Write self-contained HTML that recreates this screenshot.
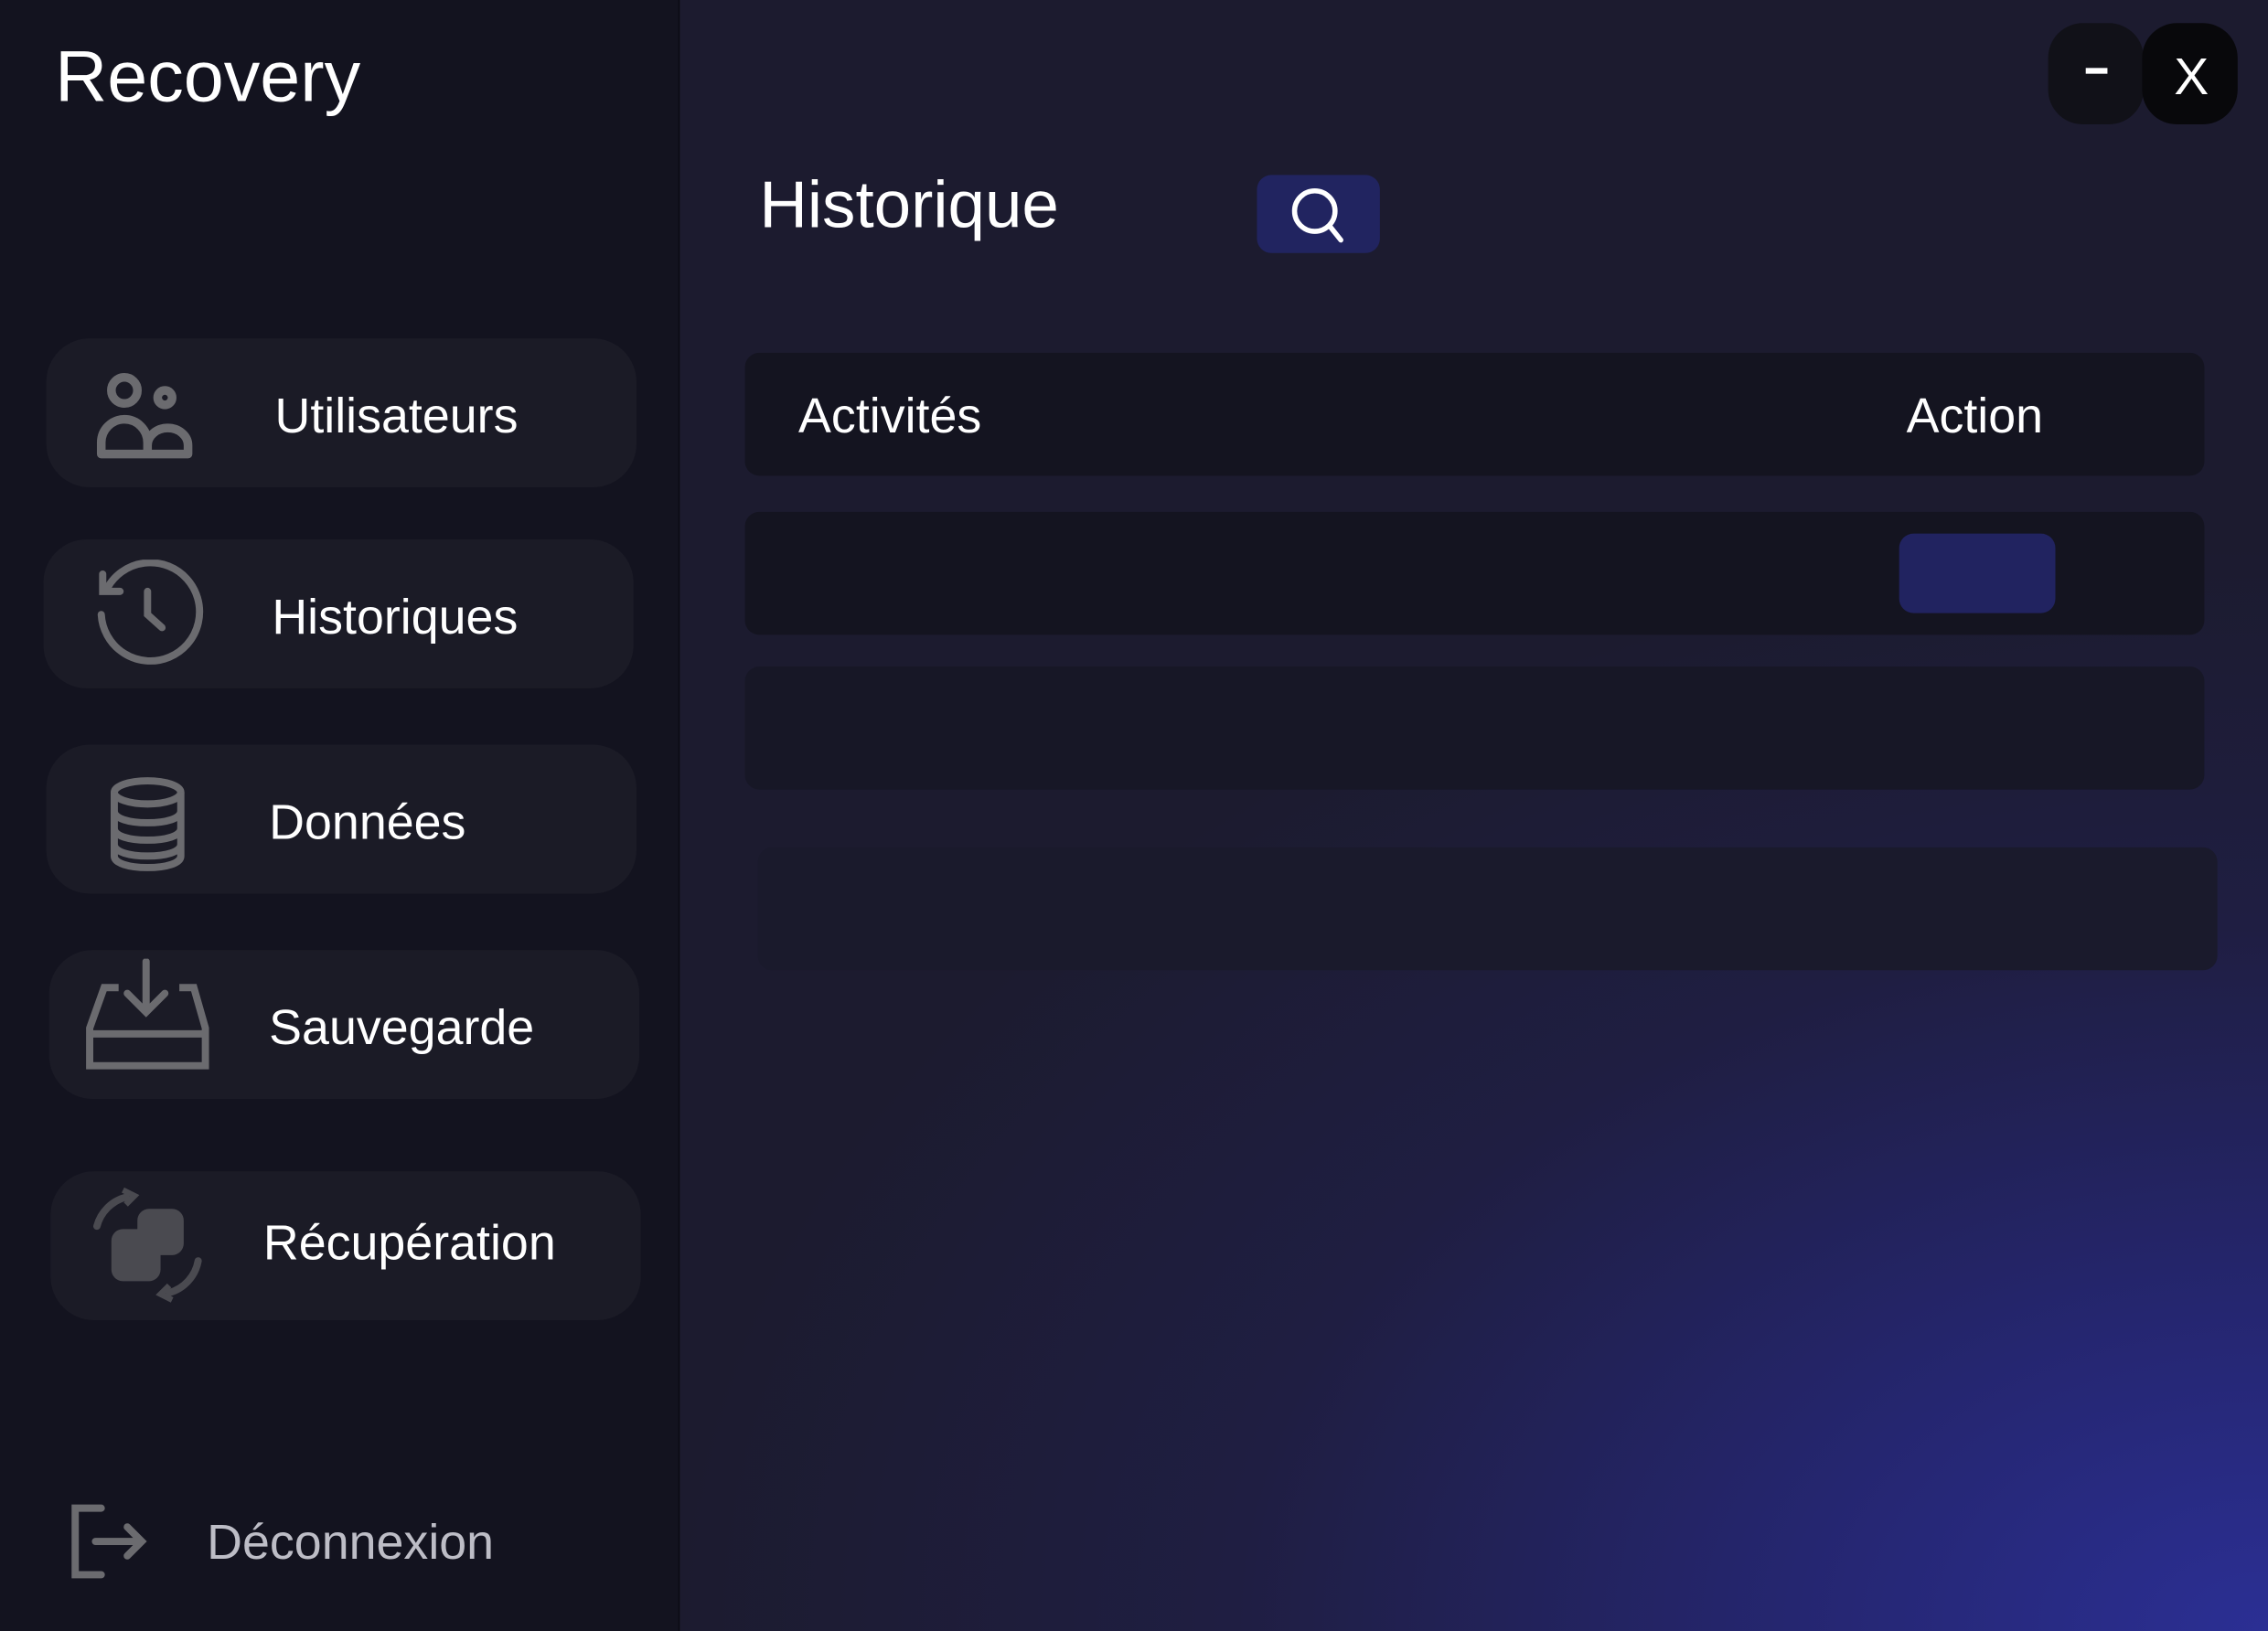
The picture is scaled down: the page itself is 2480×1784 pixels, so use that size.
<!DOCTYPE html>
<html><head><meta charset="utf-8"><style>
html,body{margin:0;padding:0;width:2480px;height:1783px;overflow:hidden;background:#13131f;}
#w{position:absolute;left:0;top:0;width:1568px;height:1128px;transform:scale(1.58163);transform-origin:0 0;font-family:"Liberation Sans",sans-serif;color:#fff;}
#side{position:absolute;left:0;top:0;width:469px;height:1128px;background:#13131f;border-right:1px solid #0b0b12;}
#main{position:absolute;left:470px;top:0;width:1098px;height:1128px;background:radial-gradient(ellipse 1100px 750px at 100% 100%,#2b2f94 0%,#252670 30%,#1f1e42 65%,#1c1b2f 100%);}
.t{position:absolute;white-space:nowrap;}
.nav{position:absolute;width:408px;height:103px;border-radius:30px;background:#1b1b26;}
.nav .l{position:absolute;top:35px;font-size:34px;color:#fff;}
.nav svg{position:absolute;}
.box{position:absolute;border-radius:10px;}
</style></head><body><div id="w">
<div id="side">
<div class="t" style="left:38px;top:24px;font-size:50px;">Recovery</div>
<div class="nav" style="left:32px;top:234px;"><svg style="left:34px;top:22px" width="70" height="62" viewBox="0 0 70 62" fill="none" stroke="#6b6b6f" stroke-width="6"><circle cx="20" cy="14" r="9"/><circle cx="48" cy="19" r="5"/><path d="M4 58v-8a16 16 0 0 1 32 0v8zM36 58v-6a14 12 0 0 1 28 0v6z" stroke-linejoin="round"/></svg><div class="l" style="left:158px">Utilisateurs</div></div>
<div class="nav" style="left:30px;top:373px;"><svg style="left:32px;top:14px" width="80" height="76" viewBox="0 0 80 76" fill="none" stroke="#6b6b6f" stroke-width="5" stroke-linecap="round"><path d="M12 20A34 34 0 1 1 8 38"/><path d="M9 10v12h12"/><path d="M40 22v16l10 9"/></svg><div class="l" style="left:158px">Historiques</div></div>
<div class="nav" style="left:32px;top:515px;"><svg style="left:44px;top:22px" width="54" height="66" viewBox="0 0 54 66" fill="none" stroke="#6b6b6f" stroke-width="5"><ellipse cx="26" cy="11" rx="23" ry="8"/><path d="M3 11v44c0 5 10 8 23 8s23-3 23-8V11M3 24c0 5 10 8 23 8s23-3 23-8M3 36c0 5 10 8 23 8s23-3 23-8M3 47c0 5 10 8 23 8s23-3 23-8"/></svg><div class="l" style="left:154px">Données</div></div>
<div class="nav" style="left:34px;top:657px;"><svg style="left:24px;top:6px" width="90" height="80" viewBox="0 0 90 80" fill="none" stroke="#6b6b6f" stroke-width="5"><path d="M43 2v34M30 24l13 13 13-13" stroke-linecap="round"/><path d="M24 20H14L4 48v26h80V48L76 20H66M6 52h76"/></svg><div class="l" style="left:152px">Sauvegarde</div></div>
<div class="nav" style="left:35px;top:810px;"><svg style="left:26px;top:10px" width="82" height="82" viewBox="0 0 82 82" fill="none"><rect x="34" y="16" width="32" height="32" rx="8" fill="#4a4a50"/><rect x="16" y="30" width="34" height="36" rx="8" fill="#4a4a50"/><path d="M6 28A28 28 0 0 1 26 8" stroke="#4a4a50" stroke-width="5" stroke-linecap="round"/><path d="M76 52A28 28 0 0 1 56 74" stroke="#4a4a50" stroke-width="5" stroke-linecap="round"/><path d="M24 3l8 4-6 6M58 79l-8-4 6-6" stroke="#4a4a50" stroke-width="4" fill="none"/></svg><div class="l" style="left:147px;top:31px">Récupération</div></div>
<svg style="position:absolute;left:46px;top:1040px" width="56" height="52" viewBox="0 0 56 52" fill="none" stroke="#6b6b6f" stroke-width="5" stroke-linecap="round"><path d="M24 3H6v46h18M20 26h32M42 16l10 10-10 10"/></svg>
<div class="t" style="left:143px;top:1048px;font-size:34px;color:#bdbdc6;">Déconnexion</div>
</div>
<div id="main">
<div class="box" style="left:946px;top:16px;width:66px;height:70px;border-radius:24px;background:#111118;"></div>
<div style="position:absolute;left:972px;top:47px;width:15px;height:4px;background:#fff;"></div>
<div class="box" style="left:1011px;top:16px;width:66px;height:70px;border-radius:24px;background:#08080b;"></div>
<div class="t" style="left:1033px;top:32px;font-size:36px;">X</div>
<div class="t" style="left:55px;top:114px;font-size:46px;">Historique</div>
<div class="box" style="left:399px;top:121px;width:85px;height:54px;background:#212460;"></div>
<svg style="position:absolute;left:420px;top:126px" width="44" height="44" viewBox="0 0 44 44" fill="none" stroke="#fff" stroke-width="3.5" stroke-linecap="round"><circle cx="19" cy="20" r="14"/><path d="M29 30l8 10"/></svg>
<div class="box" style="left:45px;top:244px;width:1009px;height:85px;background:#141420;"></div>
<div class="t" style="left:82px;top:269px;font-size:34px;">Activités</div>
<div class="t" style="left:848px;top:269px;font-size:34px;">Action</div>
<div class="box" style="left:45px;top:354px;width:1009px;height:85px;background:#141420;"></div>
<div class="box" style="left:843px;top:369px;width:108px;height:55px;background:#212360;"></div>
<div class="box" style="left:45px;top:461px;width:1009px;height:85px;background:#171726;"></div>
<div class="box" style="left:54px;top:586px;width:1009px;height:85px;background:#1a1a2c;"></div>
</div>
</div></body></html>
